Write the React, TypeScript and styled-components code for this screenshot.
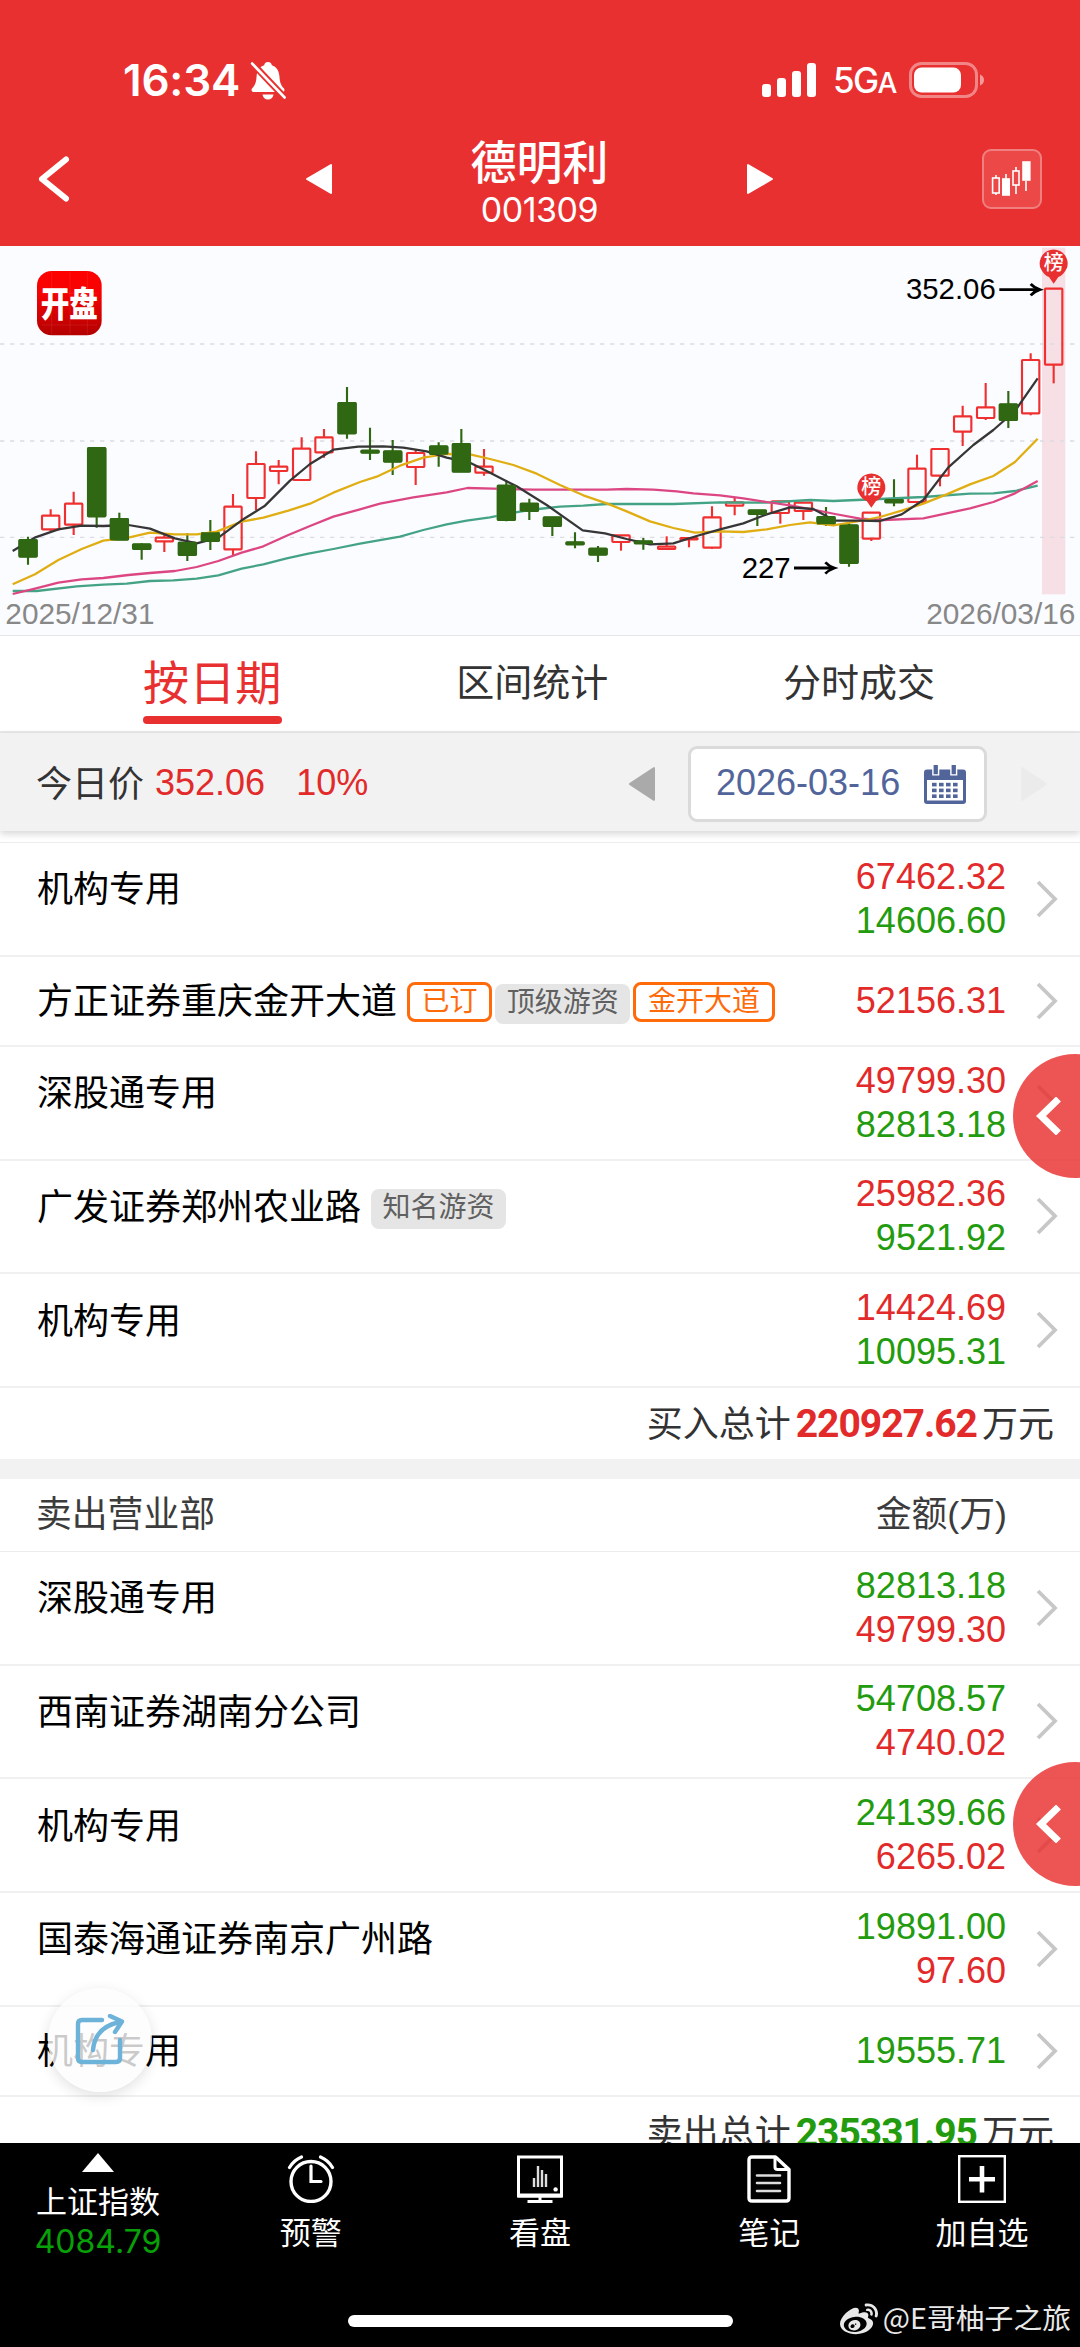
import React from "react";
import styled, { createGlobalStyle } from "styled-components";
import { FaWeibo } from "react-icons/fa";

const RED = "#e93030";
const UP = "#e22a2a";
const DOWN = "#239b0e";

const GlobalStyle = createGlobalStyle`
  * { box-sizing: border-box; }
  body {
    margin: 0;
    background: #fff;
    font-family: "Liberation Sans", "Noto Sans CJK SC", sans-serif;
  }
  svg { display: block; flex: none; }
`;

const Screen = styled.div`
  position: relative;
  width: 1080px;
  height: 2347px;
  display: flex;
  flex-direction: column;
  overflow: hidden;
  background: #fff;
`;

/* ---------- header ---------- */
const Header = styled.header`
  height: 246px;
  flex: none;
  background: ${RED};
  color: #fff;
  display: flex;
  flex-direction: column;
`;
const StatusBar = styled.div`
  height: 134px;
  padding: 26px 95px 0 123px;
  display: flex;
  align-items: center;
  justify-content: space-between;
`;
const StatusSide = styled.div`
  display: flex;
  align-items: center;
`;
const Clock = styled.span`
  width: 127px;
  font: 600 44px/60px Inter, sans-serif;
  letter-spacing: -0.2px;
`;
const Network = styled.span`
  width: 62px;
  margin: 3px 14px 0 17px;
  font: 500 35px/44px Inter, sans-serif;
  letter-spacing: -1.6px;
  white-space: nowrap;
  small { font-size: 28px; }
`;
const TitleBar = styled.div`
  height: 112px;
  padding: 0 38px 0 36px;
  display: grid;
  grid-template-columns: 296px 1fr 295px;
  align-items: start;
`;
const TitleSide = styled.div`
  height: 90px;
  display: flex;
  align-items: center;
  justify-content: space-between;
`;
const TitleBlock = styled.div`
  height: 112px;
  text-align: center;
`;
const StockName = styled.h1`
  margin: 0;
  font: 500 46px/50px "Noto Sans CJK SC", sans-serif;
`;
const StockCode = styled.div`
  margin-top: 6px;
  font: 400 34px/40px Inter, sans-serif;
  letter-spacing: -0.5px;
`;
const ChartButton = styled.button`
  width: 60px;
  height: 60px;
  padding: 0;
  border: 2px solid #f08080;
  border-radius: 9px;
  background: #ec4848;
`;

/* ---------- chart ---------- */
const ChartPanel = styled.section`
  height: 390px;
  flex: none;
  background: #fbfcff;
  border-bottom: 1px solid #e6e6ea;
`;

/* ---------- tabs and filter ---------- */
const Tabs = styled.nav`
  height: 97px;
  flex: none;
  display: flex;
  justify-content: space-between;
  padding: 0 145px 0 143px;
  border-bottom: 2px solid #e8e8e8;
`;
const Tab = styled.div<{ $active?: boolean }>`
  display: flex;
  flex-direction: column;
  justify-content: space-between;
  padding-bottom: 6px;
  font: 400 ${(p) => (p.$active ? 46.2 : 38)}px/87px "Noto Sans CJK SC", sans-serif;
  color: ${(p) => (p.$active ? RED : "#333")};
  &::after {
    content: "";
    height: ${(p) => (p.$active ? 8 : 0)}px;
    margin-bottom: 1px;
    border-radius: 4px;
    background: ${RED};
  }
`;
const TabLabel = styled.span`
  height: 80px;
`;
const FilterBar = styled.section`
  height: 98px;
  flex: none;
  position: relative;
  display: flex;
  align-items: center;
  padding: 4px 32px 0 36px;
  background: #f2f2f2;
  box-shadow: 0 3px 7px rgba(0, 0, 0, 0.16);
  font-size: 36px;
  color: #333;
`;
const PriceLabel = styled.span`
  padding-bottom: 7px;
`;
const Price = styled.span`
  margin-left: 11px;
  padding-bottom: 3px;
  color: ${UP};
`;
const Percent = styled(Price)`
  margin-left: 31px;
  margin-right: auto;
`;
const DateField = styled.div`
  width: 299px;
  height: 76px;
  margin: 0 34px 0 33px;
  padding: 0 18px 0 25px;
  display: flex;
  align-items: center;
  justify-content: space-between;
  border: 3px solid #dadada;
  border-radius: 9px;
  background: #fff;
  color: #52659b;
`;
const DateText = styled.span`
  padding-bottom: 3px;
`;

/* ---------- broker list ---------- */
const List = styled.div<{ $first?: boolean }>`
  border-top: 1.5px solid #ececee;
  margin-top: ${(p) => (p.$first ? 11 : 0)}px;
  flex: none;
`;
const Row = styled.div<{ $double: boolean }>`
  height: ${(p) => (p.$double ? 113.66 : 90.3)}px;
  padding: 0 22px 0 37px;
  display: flex;
  align-items: center;
  border-bottom: 2px solid #f0f0f1;
`;
const Broker = styled.div<{ $double: boolean }>`
  flex: 1;
  display: flex;
  align-items: center;
  padding-top: 3px;
  padding-bottom: ${(p) => (p.$double ? 20 : 0)}px;
  font-size: 36px;
  line-height: 52px;
  color: #000;
`;
const BrokerName = styled.span`
  margin-right: 10px;
`;
const Tag = styled.span<{ $outline?: boolean }>`
  height: 40px;
  margin-right: 3px;
  padding: 0 11.6px;
  border: ${(p) => (p.$outline ? "3px solid #ff6a0a" : "0")};
  border-radius: 8px;
  background: ${(p) => (p.$outline ? "#fff" : "#e5e5e5")};
  color: ${(p) => (p.$outline ? "#ff6a0a" : "#606060")};
  font-size: 28px;
  line-height: ${(p) => (p.$outline ? 34 : 37)}px;
  margin-top: ${(p) => (p.$outline ? 0 : 3)}px;
`;
const Amounts = styled.div`
  display: flex;
  flex-direction: column;
  align-items: flex-end;
  margin-right: 30px;
  font-size: 36px;
  line-height: 44px;
`;
const Amount = styled.span<{ $color: string }>`
  color: ${(p) => p.$color};
`;
const Total = styled.div`
  height: 71.5px;
  flex: none;
  display: flex;
  align-items: center;
  justify-content: flex-end;
  padding-right: 26px;
  font-size: 36px;
  color: #333;
`;
const TotalLabel = styled.span`
  padding-bottom: 5px;
`;
const TotalValue = styled.b<{ $color: string }>`
  margin: 0 5px 0 5px;
  font: 700 39px/48px Roboto, sans-serif;
  letter-spacing: -1px;
  color: ${(p) => p.$color};
`;
const Divider = styled.div`
  height: 20px;
  flex: none;
  background: #f2f2f2;
`;
const ListHeader = styled.div`
  height: 71.5px;
  flex: none;
  display: flex;
  align-items: center;
  justify-content: space-between;
  padding: 0 73px 9px 36px;
  font-size: 35.8px;
  color: #3c3c3c;
`;

/* ---------- floating controls ---------- */
const SideHandle = styled.button<{ $top: number }>`
  position: absolute;
  top: ${(p) => p.$top}px;
  left: 1013px;
  width: 124px;
  height: 124px;
  padding: 0 0 0 23px;
  border: 0;
  border-radius: 50%;
  background: rgba(233, 48, 48, 0.82);
`;
const ShareButton = styled.button`
  position: absolute;
  left: 48px;
  top: 1988px;
  width: 104px;
  height: 104px;
  display: grid;
  place-items: center;
  padding: 0 0 1px 0;
  border: 0;
  border-radius: 50%;
  background: rgba(252, 252, 252, 0.8);
  box-shadow: 0 4px 14px rgba(0, 0, 0, 0.12);
`;

/* ---------- bottom bar ---------- */
const BottomBar = styled.footer`
  position: absolute;
  left: 0;
  right: 0;
  bottom: 0;
  height: 204px;
  display: grid;
  grid-template-columns: 196px 1fr 1fr 1fr 196px;
  align-items: start;
  background: #000;
  color: #fff;
  font-size: 31px;
`;
const BottomItem = styled.div<{ $top: number }>`
  display: flex;
  flex-direction: column;
  align-items: center;
  padding-top: ${(p) => p.$top}px;
`;
const BottomLabel = styled.span`
  margin-top: 9px;
  line-height: 44px;
`;
const IndexValue = styled.span`
  font: 400 32px/34px Inter, sans-serif;
  color: #08a008;
`;
const HomeIndicator = styled.div`
  position: absolute;
  left: 348px;
  bottom: 20px;
  width: 385px;
  height: 12px;
  border-radius: 6px;
  background: #fff;
`;
const Watermark = styled.div`
  position: absolute;
  right: 9px;
  bottom: 4px;
  display: flex;
  align-items: center;
  gap: 5px;
  font: 400 28.8px/42px "Noto Sans CJK SC", sans-serif;
  color: #e8e8e8;
`;
const WatermarkName = styled.span`
  padding-bottom: 5px;
`;

/* ---------- chart data: x, body top, body bottom, high, low, rising ---------- */
type Candle = [number, number, number, number, number, 0 | 1];
const candles: Candle[] = [
  [84, 884, 936, 875, 959, 0], [152, 811, 854, 793, 858, 1], [221, 775, 840, 740, 870, 1],
  [290, 608, 815, 606, 848, 0], [358, 821, 885, 803, 885, 0], [425, 897, 913, 895, 944, 0],
  [493, 877, 890, 870, 921, 1], [562, 892, 931, 865, 948, 0], [631, 863, 889, 825, 915, 0],
  [699, 784, 914, 747, 932, 1], [768, 656, 760, 619, 795, 1], [836, 664, 679, 645, 718, 1],
  [905, 610, 706, 577, 708, 1], [972, 576, 623, 552, 638, 1], [1041, 473, 566, 426, 581, 0],
  [1110, 616, 624, 548, 645, 0], [1178, 618, 651, 585, 690, 0], [1247, 623, 667, 613, 720, 1],
  [1316, 603, 628, 592, 665, 0], [1384, 596, 681, 552, 681, 0], [1452, 664, 684, 612, 692, 1],
  [1519, 721, 826, 707, 829, 0], [1588, 775, 799, 761, 825, 0], [1657, 816, 844, 816, 873, 0],
  [1725, 891, 899, 862, 910, 0], [1794, 910, 930, 903, 951, 0], [1863, 870, 892, 870, 917, 1],
  [1930, 888, 896, 879, 914, 0], [2000, 904, 913, 874, 913, 1], [2067, 878, 884, 878, 907, 1],
  [2136, 816, 909, 784, 912, 1], [2204, 771, 783, 757, 811, 1], [2272, 795, 808, 795, 843, 0],
  [2341, 768, 805, 768, 836, 1], [2410, 772, 799, 772, 825, 1], [2478, 815, 837, 786, 843, 0],
  [2547, 840, 955, 835, 965, 0], [2614, 802, 882, 802, 888, 1], [2682, 763, 773, 703, 784, 0],
  [2751, 670, 772, 629, 772, 1], [2820, 611, 693, 611, 724, 1], [2888, 513, 561, 482, 603, 1],
  [2957, 486, 520, 414, 525, 1], [3025, 477, 526, 438, 549, 0], [3092, 344, 506, 325, 511, 1],
  [3161, 130, 360, 130, 415, 1],
];

const averages = [
  { color: "#45a385", points: "38,1038 110,1038 230,1024 310,1019 380,1016 450,1008 520,1006 590,1001 655,991 725,971 790,958 860,940 925,926 1000,912 1080,896 1200,875 1270,855 1340,838 1400,827 1470,817 1520,807 1560,800 1615,792 1680,785 1750,782 1820,777 2020,777 2160,772 2300,773 2430,765 2500,768 2640,762 2770,756 2910,746 2980,745 3045,738 3113,722" },
  { color: "#dc4683", points: "38,1047 105,1031 175,1013 245,1003 310,999 385,990 450,984 525,978 590,966 655,948 725,923 790,904 865,870 930,843 1000,815 1080,793 1140,776 1240,757 1340,742 1402,729 1480,731 1600,734 1820,734 1880,732 1960,734 2030,739 2080,745 2160,751 2230,760 2300,771 2370,781 2430,792 2505,807 2580,821 2650,825 2770,820 2840,805 2910,790 2980,771 3045,745 3113,708" },
  { color: "#e0ae12", points: "38,1018 105,988 175,945 245,912 310,887 385,878 450,863 525,868 590,868 650,860 725,830 790,818 865,797 930,776 1000,743 1080,711 1130,695 1200,662 1270,638 1340,627 1410,628 1470,642 1540,660 1610,686 1680,720 1750,751 1820,775 1880,799 1950,829 2020,849 2085,863 2160,859 2230,861 2300,853 2370,840 2430,832 2500,841 2580,828 2640,816 2705,797 2770,776 2840,748 2910,718 2980,693 3045,651 3113,581" },
  { color: "#363636", points: "38,918 104,878 175,853 245,842 310,843 385,840 450,851 525,880 590,895 655,878 725,826 795,782 870,707 930,657 1000,614 1075,605 1150,604 1210,608 1280,619 1340,638 1410,653 1460,678 1550,724 1640,780 1748,856 1815,865 1880,882 1950,898 2020,895 2090,873 2160,853 2230,835 2300,808 2370,787 2440,792 2505,827 2580,827 2640,828 2705,808 2770,765 2845,667 2920,600 2980,555 3045,498 3113,400" },
];

const Pin = ({ x, y }: { x: number; y: number }) => (
  <g>
    <path
      d={`M${x - 40} ${y + 14}A42 42 0 1 1 ${x + 40} ${y + 14}Q${x + 30} ${y + 36} ${x + 14} ${y + 42}L${x} ${y + 62}L${x - 14} ${y + 42}Q${x - 30} ${y + 36} ${x - 40} ${y + 14}Z`}
      fill={RED}
    />
    <text x={x} y={y + 21} textAnchor="middle" fontSize="60" fontWeight="500" fill="#fff" fontFamily="Noto Sans CJK SC">榜</text>
  </g>
);

const Arrow = ({ x, y }: { x: number; y: number }) => (
  <g fill="none" stroke="#000" strokeWidth="8.5">
    <path d={`M${x} ${y}H${x + 118}`} />
    <path d={`M${x + 94} ${y - 17}Q${x + 104} ${y - 6} ${x + 121} ${y}Q${x + 104} ${y + 6} ${x + 94} ${y + 17}`} />
  </g>
);

const PriceChart = () => (
  <svg width="1080" height="389" viewBox="0 3 3240 1167" fontFamily="Liberation Sans, sans-serif">
    <defs>
      <linearGradient id="logo" x1="0" y1="0" x2="0" y2="1">
        <stop offset="0" stopColor="#ff0000" />
        <stop offset="0.35" stopColor="#f40303" />
        <stop offset="1" stopColor="#b30000" />
      </linearGradient>
    </defs>
    <rect x="3126" y="8" width="70" height="1040" fill="#f6dfe5" />
    {[297, 588, 877].map((y) => (
      <path key={y} d={`M0 ${y}H3240`} stroke="#dcdce2" strokeWidth="4" strokeDasharray="13 17" />
    ))}
    {candles.map(([x, top, bottom, high, low, up]) => (
      <g key={x} stroke={up ? "#f03030" : "#2f6713"} strokeWidth="6.4">
        <path d={`M${x} ${high}V${top}M${x} ${bottom}V${low}`} />
        <rect
          x={x - 26}
          y={top + 1}
          width="52"
          height={Math.max(bottom - top - 2, 3)}
          rx="2"
          fill={up ? "none" : "#2f6713"}
        />
      </g>
    ))}
    {averages.map((line) => (
      <polyline key={line.color} points={line.points} fill="none" stroke={line.color} strokeWidth="6.8" strokeLinejoin="round" />
    ))}
    {candles.filter((c) => !c[5]).map(([x, top, bottom]) => (
      <rect key={x} x={x - 28} y={top - 1} width="57" height={bottom - top + 2} rx="4" fill="#2f6713" />
    ))}
    <Pin x={2614} y={726} />
    <Pin x={3161} y={54} />
    <text x="2718" y="163" fontSize="88" fill="#000">352.06</text>
    <Arrow x={2998} y={134} />
    <text x="2225" y="998" fontSize="88" fill="#000">227</text>
    <Arrow x={2382} y={969} />
    <text x="16" y="1136" fontSize="89.4" fill="#888">2025/12/31</text>
    <text x="3226" y="1136" fontSize="89.4" fill="#888" textAnchor="end">2026/03/16</text>
    <rect x="111" y="78" width="194" height="193" rx="44" fill="url(#logo)" />
    <path d="M125 145H291M125 240H291M155 80V268M210 80V268M262 80V268" stroke="#fff" strokeOpacity="0.13" strokeWidth="2" />
    <text transform="translate(208 216) scale(1 1.22)" textAnchor="middle" fontSize="86" fontWeight="900" fill="#fff" fontFamily="Noto Sans CJK SC">开盘</text>
  </svg>
);

/* ---------- icons ---------- */
const Triangle = ({ dir, color, w = 27, h = 32 }: { dir: "left" | "right"; color: string; w?: number; h?: number }) => (
  <svg width={w} height={h} viewBox="0 0 27 32" preserveAspectRatio="none">
    <path d={dir === "left" ? "M26 2V30L2 16Z" : "M1 2V30L25 16Z"} fill={color} stroke={color} strokeWidth="2" strokeLinejoin="round" />
  </svg>
);
const RowChevron = () => (
  <svg width="22" height="38" viewBox="0 0 22 38">
    <path d="M2 2L19 19L2 36" fill="none" stroke="#c7c7c7" strokeWidth="3.8" />
  </svg>
);
const BellOff = () => (
  <svg width="36" height="39" viewBox="0 0 36 39">
    <path d="M18 1C20.5 1 21.6 2.6 21.8 4.2C26.6 5.6 29 10 29.4 15C29.8 21 30.6 24 34 27.6C35 29 34.4 31 32.6 31H3.4C1.6 31 1 29 2 27.6C5.4 24 6.2 21 6.6 15C7 10 9.4 5.6 14.2 4.2C14.4 2.6 15.5 1 18 1Z" fill="#fff" />
    <path d="M12.5 33.4H23.5C23 36.6 20.8 38.4 18 38.4S13 36.6 12.5 33.4Z" fill="#fff" />
    <path d="M0.5 0.5L36 38" stroke={RED} strokeWidth="6.6" />
    <path d="M2.2 2.6L34.5 36.4" stroke="#fff" strokeWidth="2.8" strokeLinecap="round" />
  </svg>
);
const Signal = () => (
  <svg width="54" height="34" viewBox="0 0 54 34" fill="#fff">
    <rect x="0" y="21" width="9" height="13" rx="3" />
    <rect x="15" y="15" width="9" height="19" rx="3" />
    <rect x="30" y="8" width="9" height="26" rx="3" />
    <rect x="45" y="0" width="9" height="34" rx="3" />
  </svg>
);
const Battery = () => (
  <svg width="76" height="36" viewBox="0 0 76 36">
    <rect x="1.5" y="1.5" width="66" height="33" rx="11" fill="none" stroke="#fff" strokeOpacity="0.42" strokeWidth="3" />
    <rect x="5" y="5.5" width="47" height="25" rx="7.5" fill="#fff" />
    <path d="M71 12.5Q75 14 75 18T71 23.5Z" fill="#fff" fillOpacity="0.5" />
  </svg>
);
const CandleIcon = () => (
  <svg width="56" height="56" viewBox="0 0 56 56" fill="none" stroke="#fff" strokeWidth="1.6">
    <path d="M12 24V27M12 42V44M22 23V28M32 16V20M32 34V43M42 30V40" />
    <rect x="8.6" y="27" width="6.6" height="15" />
    <rect x="18.8" y="28" width="6.4" height="16" fill="#fff" />
    <rect x="29" y="20" width="6" height="14" />
    <rect x="39" y="11" width="6.8" height="18" fill="#fff" />
  </svg>
);
const Calendar = () => (
  <svg width="42" height="39" viewBox="0 0 42 39">
    <path d="M3 4.5H39Q42 4.5 42 7.5V36Q42 39 39 39H3Q0 39 0 36V7.5Q0 4.5 3 4.5Z" fill="#52659b" />
    <rect x="3" y="15" width="36" height="20.5" fill="#fff" />
    <path d="M8.2 0H15.3V10.5H8.2ZM26.2 0H33.3V10.5H26.2Z" fill="#fff" />
    <path d="M9.6 0H13.9V9.2H9.6ZM27.6 0H31.9V9.2H27.6Z" fill="#52659b" />
    {[17.8, 23.6, 29.4].map((y) =>
      [8, 15, 22, 29].map((x) => <rect key={`${x}-${y}`} x={x} y={y} width="4.6" height="3.6" fill="#52659b" />)
    )}
  </svg>
);
const ShareIcon = () => (
  <svg width="50" height="52" viewBox="0 0 50 52" fill="none" stroke="#6db2d8" strokeWidth="4.4" strokeLinecap="round" strokeLinejoin="round">
    <path d="M27 6H7Q3 6 3 10V44Q3 48 7 48H41Q45 48 45 44V26" />
    <path d="M18 36Q20 13 45 8M35 2L47 7.5L40 18" />
  </svg>
);
const AlarmIcon = () => (
  <svg width="48" height="48" viewBox="0 0 48 48" fill="none" stroke="#fff" strokeLinecap="round">
    <circle cx="24" cy="26.5" r="20" strokeWidth="3.4" />
    <path d="M24 11V26.5H34" strokeWidth="3.2" />
    <path d="M2.5 12.5Q7 5 14.5 2M45.5 12.5Q41 5 33.5 2" strokeWidth="3.2" />
  </svg>
);
const MonitorIcon = () => (
  <svg width="46" height="48" viewBox="0 0 46 48" fill="none" stroke="#fff">
    <path d="M1.5 2H44.5V41H1.5Z" strokeWidth="3" />
    <path d="M1 40.5H45" strokeWidth="4" />
    <path d="M23 42V46M10.5 46.5H35.5" strokeWidth="3" />
    <path d="M17 23V32M21 11V32M25 15V32M29 19V32" strokeWidth="2.4" stroke="#ddd" />
    <circle cx="38.6" cy="34.4" r="2.2" fill="#fff" stroke="none" />
  </svg>
);
const NoteIcon = () => (
  <svg width="44" height="48" viewBox="0 0 44 48" fill="none" stroke="#fff" strokeWidth="3.4" strokeLinejoin="round">
    <path d="M5 2H28.5L42 14.5V43Q42 46 39 46H5Q2 46 2 43V5Q2 2 5 2Z" />
    <path d="M28 3V12Q28 14.5 30.5 14.5H41" strokeWidth="3" />
    <path d="M10 20.5H33M10 28H33M10 36H33" strokeWidth="2.6" strokeLinecap="round" stroke="#ddd" />
  </svg>
);
const AddIcon = () => (
  <svg width="48" height="48" viewBox="0 0 48 48" fill="none" stroke="#fff">
    <rect x="1.2" y="1.2" width="45.6" height="45.6" strokeWidth="2.4" />
    <path d="M24 11V37.5M11 24.3H37" strokeWidth="4.6" />
  </svg>
);

/* ---------- rows ---------- */
type Entry = { name: string; values: [string, string][]; tags?: { text: string; outline?: boolean }[] };
const buyers: Entry[] = [
  { name: "机构专用", values: [["67462.32", UP], ["14606.60", DOWN]] },
  {
    name: "方正证券重庆金开大道",
    values: [["52156.31", UP]],
    tags: [{ text: "已订", outline: true }, { text: "顶级游资" }, { text: "金开大道", outline: true }],
  },
  { name: "深股通专用", values: [["49799.30", UP], ["82813.18", DOWN]] },
  { name: "广发证券郑州农业路", values: [["25982.36", UP], ["9521.92", DOWN]], tags: [{ text: "知名游资" }] },
  { name: "机构专用", values: [["14424.69", UP], ["10095.31", DOWN]] },
];
const sellers: Entry[] = [
  { name: "深股通专用", values: [["82813.18", DOWN], ["49799.30", UP]] },
  { name: "西南证券湖南分公司", values: [["54708.57", DOWN], ["4740.02", UP]] },
  { name: "机构专用", values: [["24139.66", DOWN], ["6265.02", UP]] },
  { name: "国泰海通证券南京广州路", values: [["19891.00", DOWN], ["97.60", UP]] },
  { name: "机构专用", values: [["19555.71", DOWN]] },
];

const BrokerRow = ({ entry }: { entry: Entry }) => {
  const double = entry.values.length > 1;
  return (
    <Row $double={double}>
      <Broker $double={double}>
        <BrokerName>{entry.name}</BrokerName>
        {entry.tags?.map((t) => (
          <Tag key={t.text} $outline={t.outline}>{t.text}</Tag>
        ))}
      </Broker>
      <Amounts>
        {entry.values.map(([value, color]) => (
          <Amount key={value} $color={color}>{value}</Amount>
        ))}
      </Amounts>
      <RowChevron />
    </Row>
  );
};

const TotalRow = ({ label, value, color }: { label: string; value: string; color: string }) => (
  <Total>
    <TotalLabel>{label}</TotalLabel>
    <TotalValue $color={color}>{value}</TotalValue>
    <TotalLabel>万元</TotalLabel>
  </Total>
);

const HandleChevron = () => (
  <svg width="25" height="38" viewBox="0 0 25 38">
    <path d="M22.5 2L5 19L22.5 36" fill="none" stroke="#fff" strokeWidth="7" />
  </svg>
);

export default function App() {
  return (
    <Screen>
      <GlobalStyle />
      <Header>
        <StatusBar>
          <StatusSide>
            <Clock>16:34</Clock>
            <BellOff />
          </StatusSide>
          <StatusSide>
            <Signal />
            <Network>5G<small>A</small></Network>
            <Battery />
          </StatusSide>
        </StatusBar>
        <TitleBar>
          <TitleSide>
            <svg width="34" height="46" viewBox="0 0 34 46">
              <path d="M30 3.5L6 23L30 42.5" fill="none" stroke="#fff" strokeWidth="6" strokeLinecap="round" strokeLinejoin="round" />
            </svg>
            <Triangle dir="left" color="#fff" />
          </TitleSide>
          <TitleBlock>
            <StockName>德明利</StockName>
            <StockCode>001309</StockCode>
          </TitleBlock>
          <TitleSide>
            <Triangle dir="right" color="#fff" />
            <ChartButton><CandleIcon /></ChartButton>
          </TitleSide>
        </TitleBar>
      </Header>

      <ChartPanel><PriceChart /></ChartPanel>

      <Tabs>
        <Tab $active><TabLabel>按日期</TabLabel></Tab>
        <Tab><TabLabel>区间统计</TabLabel></Tab>
        <Tab><TabLabel>分时成交</TabLabel></Tab>
      </Tabs>
      <FilterBar>
        <PriceLabel>今日价</PriceLabel>
        <Price>352.06</Price>
        <Percent>10%</Percent>
        <Triangle dir="left" color="#aaa" h={36} />
        <DateField>
          <DateText>2026-03-16</DateText>
          <Calendar />
        </DateField>
        <Triangle dir="right" color="#ebebeb" h={36} />
      </FilterBar>

      <List $first>
        {buyers.map((entry, i) => <BrokerRow key={i} entry={entry} />)}
      </List>
      <TotalRow label="买入总计" value="220927.62" color={UP} />
      <Divider />
      <ListHeader>
        <span>卖出营业部</span>
        <span>金额(万)</span>
      </ListHeader>
      <List>
        {sellers.map((entry, i) => <BrokerRow key={i} entry={entry} />)}
      </List>
      <TotalRow label="卖出总计" value="235331.95" color={DOWN} />

      <SideHandle $top={1054}><HandleChevron /></SideHandle>
      <SideHandle $top={1762}><HandleChevron /></SideHandle>
      <ShareButton><ShareIcon /></ShareButton>

      <BottomBar>
        <BottomItem $top={10}>
          <svg width="32" height="19" viewBox="0 0 32 19"><path d="M16 0L32 19H0Z" fill="#fff" /></svg>
          <BottomLabel>上证指数</BottomLabel>
          <IndexValue>4084.79</IndexValue>
        </BottomItem>
        <BottomItem $top={12}><AlarmIcon /><BottomLabel>预警</BottomLabel></BottomItem>
        <BottomItem $top={12}><MonitorIcon /><BottomLabel>看盘</BottomLabel></BottomItem>
        <BottomItem $top={12}><NoteIcon /><BottomLabel>笔记</BottomLabel></BottomItem>
        <BottomItem $top={12}><AddIcon /><BottomLabel>加自选</BottomLabel></BottomItem>
        <HomeIndicator />
        <Watermark>
          <FaWeibo size={38} />
          <WatermarkName>@E哥柚子之旅</WatermarkName>
        </Watermark>
      </BottomBar>
    </Screen>
  );
}
